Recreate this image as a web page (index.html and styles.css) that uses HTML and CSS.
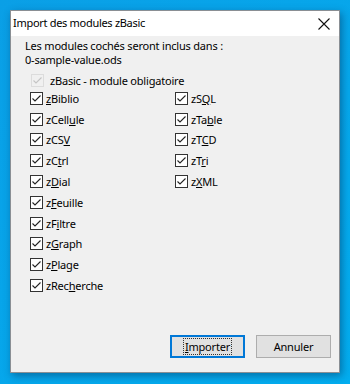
FILE: index.html
```html
<!DOCTYPE html>
<html lang="fr">
<head>
  <meta charset="UTF-8">
  <title>Import des modules zBasic</title>
  <link rel="stylesheet" href="styles.css">
</head>
<body>
  <div class="dialog">
    <div class="title-bar">
      <span class="title">Import des modules zBasic</span>
      <svg class="close" width="12" height="12" viewBox="0 0 12 12">
        <path d="M0.5 0.5 L11.5 11.5 M11.5 0.5 L0.5 11.5" stroke="#111" stroke-width="1.1" fill="none"/>
      </svg>
    </div>

    <div class="content">
      <p class="intro">Les modules cochés seront inclus dans :<br>0-sample-value.ods</p>

      <label class="check disabled">
        <svg class="box" width="13" height="13" viewBox="0 0 13 13">
          <rect x="0.5" y="0.5" width="12" height="12" fill="none" stroke="#dcdcdc"/>
          <path d="M2.5 6.5 L5 9 L10.5 3.5" stroke="#c4c4c4" stroke-width="1.1" fill="none"/>
        </svg>
        <span>zBasic - module obligatoire</span>
      </label>

      <div class="modules">
        <label class="check"><svg class="box" width="13" height="13" viewBox="0 0 13 13"><rect x="0.5" y="0.5" width="12" height="12" fill="#fff" stroke="#333"/><path d="M2.5 6.5 L5 9 L10.5 3.5" stroke="#222" stroke-width="1.1" fill="none"/></svg><span><u>z</u>Biblio</span></label>
        <label class="check"><svg class="box" width="13" height="13" viewBox="0 0 13 13"><rect x="0.5" y="0.5" width="12" height="12" fill="#fff" stroke="#333"/><path d="M2.5 6.5 L5 9 L10.5 3.5" stroke="#222" stroke-width="1.1" fill="none"/></svg><span>zCell<u>u</u>le</span></label>
        <label class="check"><svg class="box" width="13" height="13" viewBox="0 0 13 13"><rect x="0.5" y="0.5" width="12" height="12" fill="#fff" stroke="#333"/><path d="M2.5 6.5 L5 9 L10.5 3.5" stroke="#222" stroke-width="1.1" fill="none"/></svg><span>zCS<u>V</u></span></label>
        <label class="check"><svg class="box" width="13" height="13" viewBox="0 0 13 13"><rect x="0.5" y="0.5" width="12" height="12" fill="#fff" stroke="#333"/><path d="M2.5 6.5 L5 9 L10.5 3.5" stroke="#222" stroke-width="1.1" fill="none"/></svg><span>zC<u>t</u>rl</span></label>
        <label class="check"><svg class="box" width="13" height="13" viewBox="0 0 13 13"><rect x="0.5" y="0.5" width="12" height="12" fill="#fff" stroke="#333"/><path d="M2.5 6.5 L5 9 L10.5 3.5" stroke="#222" stroke-width="1.1" fill="none"/></svg><span>z<u>D</u>ial</span></label>
        <label class="check"><svg class="box" width="13" height="13" viewBox="0 0 13 13"><rect x="0.5" y="0.5" width="12" height="12" fill="#fff" stroke="#333"/><path d="M2.5 6.5 L5 9 L10.5 3.5" stroke="#222" stroke-width="1.1" fill="none"/></svg><span>z<u>F</u>euille</span></label>
        <label class="check"><svg class="box" width="13" height="13" viewBox="0 0 13 13"><rect x="0.5" y="0.5" width="12" height="12" fill="#fff" stroke="#333"/><path d="M2.5 6.5 L5 9 L10.5 3.5" stroke="#222" stroke-width="1.1" fill="none"/></svg><span>zF<u>i</u>ltre</span></label>
        <label class="check"><svg class="box" width="13" height="13" viewBox="0 0 13 13"><rect x="0.5" y="0.5" width="12" height="12" fill="#fff" stroke="#333"/><path d="M2.5 6.5 L5 9 L10.5 3.5" stroke="#222" stroke-width="1.1" fill="none"/></svg><span>z<u>G</u>raph</span></label>
        <label class="check"><svg class="box" width="13" height="13" viewBox="0 0 13 13"><rect x="0.5" y="0.5" width="12" height="12" fill="#fff" stroke="#333"/><path d="M2.5 6.5 L5 9 L10.5 3.5" stroke="#222" stroke-width="1.1" fill="none"/></svg><span>z<u>P</u>lage</span></label>
        <label class="check"><svg class="box" width="13" height="13" viewBox="0 0 13 13"><rect x="0.5" y="0.5" width="12" height="12" fill="#fff" stroke="#333"/><path d="M2.5 6.5 L5 9 L10.5 3.5" stroke="#222" stroke-width="1.1" fill="none"/></svg><span>zRec<u>h</u>erche</span></label>
        <label class="check"><svg class="box" width="13" height="13" viewBox="0 0 13 13"><rect x="0.5" y="0.5" width="12" height="12" fill="#fff" stroke="#333"/><path d="M2.5 6.5 L5 9 L10.5 3.5" stroke="#222" stroke-width="1.1" fill="none"/></svg><span>zS<u>Q</u>L</span></label>
        <label class="check"><svg class="box" width="13" height="13" viewBox="0 0 13 13"><rect x="0.5" y="0.5" width="12" height="12" fill="#fff" stroke="#333"/><path d="M2.5 6.5 L5 9 L10.5 3.5" stroke="#222" stroke-width="1.1" fill="none"/></svg><span>zTa<u>b</u>le</span></label>
        <label class="check"><svg class="box" width="13" height="13" viewBox="0 0 13 13"><rect x="0.5" y="0.5" width="12" height="12" fill="#fff" stroke="#333"/><path d="M2.5 6.5 L5 9 L10.5 3.5" stroke="#222" stroke-width="1.1" fill="none"/></svg><span>zT<u>C</u>D</span></label>
        <label class="check"><svg class="box" width="13" height="13" viewBox="0 0 13 13"><rect x="0.5" y="0.5" width="12" height="12" fill="#fff" stroke="#333"/><path d="M2.5 6.5 L5 9 L10.5 3.5" stroke="#222" stroke-width="1.1" fill="none"/></svg><span>zT<u>r</u>i</span></label>
        <label class="check"><svg class="box" width="13" height="13" viewBox="0 0 13 13"><rect x="0.5" y="0.5" width="12" height="12" fill="#fff" stroke="#333"/><path d="M2.5 6.5 L5 9 L10.5 3.5" stroke="#222" stroke-width="1.1" fill="none"/></svg><span>z<u>X</u>ML</span></label>
      </div>

      <div class="buttons">
        <button class="btn default"><span class="focus"><u>I</u>mporter</span></button>
        <button class="btn">Annuler</button>
      </div>
    </div>
  </div>
</body>
</html>
```

FILE: styles.css
```css
/* Windows-like dialog on a blue desktop */
body {
  margin: 0;
  height: 384px;
  overflow: hidden;
  background: linear-gradient(135deg, #0a9fe6, #03aef0);
  font-family: 'Noto Sans', sans-serif;
  font-size: 11px;
  letter-spacing: -0.2px;
  color: #000;
}

.dialog {
  margin: 10px 0 0 10px;
  width: 330px;
  height: 363px;
  box-sizing: border-box;
  border: 1px solid #8a8f94;
  background: #f0f0f0;
  box-shadow: 2px 3px 8px rgba(0, 40, 80, 0.45);
  display: flex;
  flex-direction: column;
}

.title-bar {
  height: 25px;
  background: #fff;
  display: flex;
  align-items: center;
  justify-content: space-between;
  padding: 0 9px 0 2px;
  letter-spacing: -0.3px;
}

.title {
  padding-bottom: 2px;
}

.content {
  flex: 1;
  display: flex;
  flex-direction: column;
  padding: 3px 8px 14px 14px;
}

.intro {
  margin: 0 0 5px;
  line-height: 14px;
}

.check {
  display: flex;
  align-items: center;
  gap: 3px;
  height: 20.8px;
}

.box {
  flex: none;
  margin-left: 5px;
}

.disabled {
  gap: 6px;
  height: 16px;
}

.disabled .box {
  margin-left: 6px;
}

.modules {
  display: grid;
  grid-template-columns: 145px 1fr;
  grid-template-rows: repeat(10, 20.8px);
  grid-auto-flow: column;
}

.buttons {
  margin-top: auto;
  display: flex;
  justify-content: flex-end;
  gap: 11px;
}

.btn {
  width: 75px;
  height: 23px;
  padding: 0;
  font-family: inherit;
  font-size: 11px;
  letter-spacing: -0.2px;
  color: #000;
  background: #e1e1e1;
  border: 1px solid #adadad;
  display: flex;
  align-items: center;
  justify-content: center;
}

.btn.default {
  border: 2px solid #0078d7;
}

.focus {
  padding: 0 1px;
  line-height: 15px;
  outline: 1px dotted #333;
}
```
